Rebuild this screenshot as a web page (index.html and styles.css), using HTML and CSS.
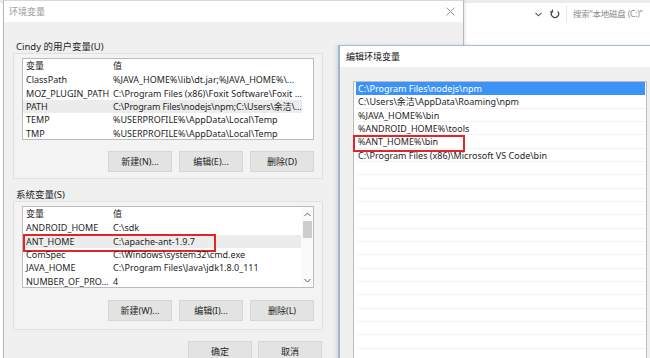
FILE: index.html
```
<!DOCTYPE html>
<html lang="zh-CN">
<head>
<meta charset="utf-8">
<title>环境变量</title>
<link rel="stylesheet" href="styles.css">
</head>
<body>
<div class="desk">
  <div class="explorer">
    <div class="ex-top"></div>
    <div class="ex-bar">
      <svg class="ex-chev" width="7" height="5" viewBox="0 0 7 5"><path d="M0.5 0.8 L3.5 3.8 L6.5 0.8" fill="none" stroke="#555" stroke-width="1.1"/></svg>
      <svg class="ex-refresh" width="10" height="10" viewBox="0 0 10 10"><path d="M7.6 2.4 A3.6 3.6 0 1 1 2.4 2.4" fill="none" stroke="#444" stroke-width="1.2"/><path d="M2.4 0.6 L2.4 2.9 L0.2 2.9" fill="none" stroke="#444" stroke-width="1.1"/></svg>
      <div class="ex-search">搜索“本地磁盘 (C:)”</div>
    </div>
  </div>

  <div class="win main">
    <div class="titlebar">
      <span class="title dim">环境变量</span>
      <svg class="close" width="9" height="9" viewBox="0 0 9 9"><path d="M0.5 0.5 L8.5 8.5 M8.5 0.5 L0.5 8.5" stroke="#9a9a9a" stroke-width="1"/></svg>
    </div>
    <div class="main-body">
      <div class="group-label">Cindy 的用户变量(U)</div>
      <div class="group">
        <div class="list">
          <div class="cols">
            <div class="row head"><span class="c1">变量</span><span class="c2">值</span></div>
            <div class="row"><span class="c1">ClassPath</span><span class="c2">%JAVA_HOME%\lib\dt.jar;%JAVA_HOME%\...</span></div>
            <div class="row"><span class="c1">MOZ_PLUGIN_PATH</span><span class="c2">C:\Program Files (x86)\Foxit Software\Foxit ...</span></div>
            <div class="row sel"><span class="c1">PATH</span><span class="c2 tight">C:\Program Files\nodejs\npm;C:\Users\余洁\...</span></div>
            <div class="row"><span class="c1">TEMP</span><span class="c2">%USERPROFILE%\AppData\Local\Temp</span></div>
            <div class="row"><span class="c1">TMP</span><span class="c2">%USERPROFILE%\AppData\Local\Temp</span></div>
          </div>
        </div>
        <div class="btns">
          <button class="btn">新建(N)...</button>
          <button class="btn">编辑(E)...</button>
          <button class="btn">删除(D)</button>
        </div>
      </div>

      <div class="group-label sys">系统变量(S)</div>
      <div class="group sysg">
        <div class="list">
          <div class="cols">
            <div class="row head"><span class="c1">变量</span><span class="c2">值</span></div>
            <div class="row"><span class="c1">ANDROID_HOME</span><span class="c2">C:\sdk</span></div>
            <div class="row sel mark"><span class="c1">ANT_HOME</span><span class="c2">C:\apache-ant-1.9.7</span><span class="redbox rb1"></span></div>
            <div class="row"><span class="c1">ComSpec</span><span class="c2">C:\Windows\system32\cmd.exe</span></div>
            <div class="row"><span class="c1">JAVA_HOME</span><span class="c2">C:\Program Files\Java\jdk1.8.0_111</span></div>
            <div class="row"><span class="c1">NUMBER_OF_PRO...</span><span class="c2">4</span></div>
          </div>
          <div class="sb">
            <svg class="sb-arrow" width="7" height="5" viewBox="0 0 7 5"><path d="M0.5 4 L3.5 1 L6.5 4" fill="none" stroke="#606060" stroke-width="1"/></svg>
            <div class="sb-thumb"></div>
            <div class="sb-fill"></div>
            <svg class="sb-arrow" width="7" height="5" viewBox="0 0 7 5"><path d="M0.5 1 L3.5 4 L6.5 1" fill="none" stroke="#606060" stroke-width="1"/></svg>
          </div>
        </div>
        <div class="btns">
          <button class="btn">新建(W)...</button>
          <button class="btn">编辑(I)...</button>
          <button class="btn">删除(L)</button>
        </div>
      </div>

      <div class="footer">
        <button class="btn">确定</button>
        <button class="btn">取消</button>
      </div>
    </div>
  </div>

  <div class="win edit">
    <div class="titlebar edit-tb">
      <span class="title">编辑环境变量</span>
    </div>
    <div class="edit-body">
      <div class="elist">
        <div class="erow esel">C:\Program Files\nodejs\npm</div>
        <div class="erow">C:\Users\余洁\AppData\Roaming\npm</div>
        <div class="erow">%JAVA_HOME%\bin</div>
        <div class="erow">%ANDROID_HOME%\tools</div>
        <div class="erow mark">%ANT_HOME%\bin<span class="redbox rb2"></span></div>
        <div class="erow">C:\Program Files (x86)\Microsoft VS Code\bin</div>
        <div class="erow"></div><div class="erow"></div><div class="erow"></div><div class="erow"></div>
        <div class="erow"></div><div class="erow"></div><div class="erow"></div><div class="erow"></div>
        <div class="erow"></div><div class="erow"></div><div class="erow"></div><div class="erow"></div>
        <div class="erow"></div><div class="erow"></div><div class="erow"></div><div class="erow"></div>
      </div>
    </div>
  </div>
</div>
</body>
</html>
```
FILE: styles.css
```
* { box-sizing: border-box; }
html, body { margin: 0; padding: 0; }
body {
  width: 650px; height: 358px; overflow: hidden; background: #fff;
  font-family: "Noto Sans", "Noto Sans CJK SC", sans-serif;
  font-size: 9px; color: #1e1e1e;
}
.desk { position: relative; width: 650px; height: 358px; overflow: hidden; }

/* explorer behind */
.explorer { position: absolute; left: 0; top: 0; width: 650px; height: 358px; background: #fff; }
.ex-top { height: 3px; background: #ebebeb; }
.ex-bar { display: flex; align-items: center; height: 22px; padding-left: 535px; }
.ex-chev { margin-right: 8px; }
.ex-refresh { margin-right: 6px; }
.ex-search { flex: 1; height: 18px; line-height: 18px; padding-left: 6px; color: #8c8c8c; font-size: 8.5px; letter-spacing: -0.2px; border-left: 1px solid #e6e6e6; white-space: nowrap; }

/* windows */
.win { position: absolute; }
.main {
  left: 3px; top: 0; width: 461px; height: 380px; background: #f0f0f0;
  border-left: 1px solid #b8b8b8; border-right: 1px solid #b8b8b8; border-top: 1px solid #d8d8d8;
  box-shadow: 1px 0 3px rgba(0,0,0,0.12);
}
.titlebar { display: flex; align-items: center; height: 21px; background: #fff; padding: 0 6px 0 5px; }
.title { font-family: "Noto Sans CJK SC", sans-serif; font-size: 9px; color: #111; }
.title.dim { color: #9a9a9a; }
.close { margin-left: auto; margin-right: 2px; }

.main-body { padding-left: 9px; }
.group-label { margin-top: 18px; height: 13px; line-height: 13px; padding-left: 3px; font-size: 9.5px; white-space: nowrap; }
.group-label.sys { margin-top: 9px; }
.group { width: 310px; border: 1px solid #e0e0e0; background: #f3f3f3; padding: 4px 8px 6px 8px; }
.sysg { padding-bottom: 8px; }

.list { display: flex; height: 82px; background: #fff; border: 1px solid #bcbcbc; overflow: hidden; }
.cols { width: 279px; }
.row { position: relative; display: flex; height: 13.333px; line-height: 13.333px; white-space: nowrap; }
.row.head { height: 14.4px; line-height: 14.4px; }
.row.sel { background: #ececec; }
.c1 { width: 87px; padding-left: 3px; overflow: hidden; flex: none; }
.c2 { flex: 1; padding-left: 3px; }
.c2.tight { letter-spacing: -0.12px; }

.sb { margin-left: auto; width: 12px; display: flex; flex-direction: column; align-items: center; background: #fafafa; }
.sb-arrow { flex: none; margin-top: 5px; margin-bottom: 4px; }
.sb-thumb { flex: none; width: 9px; height: 17px; background: #cdcdcd; }
.sb-fill { flex: 1; }

.btns { display: flex; justify-content: flex-end; gap: 7px; margin-top: 11px; }
.sysg .btns { margin-top: 12px; }
.btn {
  width: 64px; height: 21px; padding: 0; margin: 0;
  background: #e3e3e3; border: 1px solid #d6d6d6;
  font-family: "Noto Sans", "Noto Sans CJK SC", sans-serif; font-size: 9px; color: #1e1e1e;
}
.footer { display: flex; justify-content: flex-end; gap: 6px; width: 310px; padding-right: 1px; margin-top: 11px; }

.redbox { position: absolute; border: 2px solid #e0262a; pointer-events: none; }
.rb1 { left: 0; top: -1px; width: 193px; height: 18px; }

/* edit dialog */
.edit {
  left: 338px; top: 45px; width: 330px; height: 330px; background: #f0f0f0;
  border-left: 2px solid #9fb6d0; border-top: 1px solid #a9bcd3;
  box-shadow: -2px 0 4px rgba(0,0,0,0.10);
}
.edit-tb { height: 21px; padding-left: 6px; }
.edit-body { padding: 14px 0 0 13px; }
.elist { width: 294px; height: 300px; background: #fff; border: 1px solid #bcbcbc; padding: 0 1px 0 2px; }
.erow { position: relative; height: 13.333px; line-height: 13px; padding-left: 2px; border-bottom: 1px solid #f3f3f3; white-space: nowrap; }
.erow.esel { background: #3d93f5; color: #fff; border-bottom-color: #3d93f5; }
.rb2 { left: -3px; top: 0; width: 112px; height: 17px; }
```
